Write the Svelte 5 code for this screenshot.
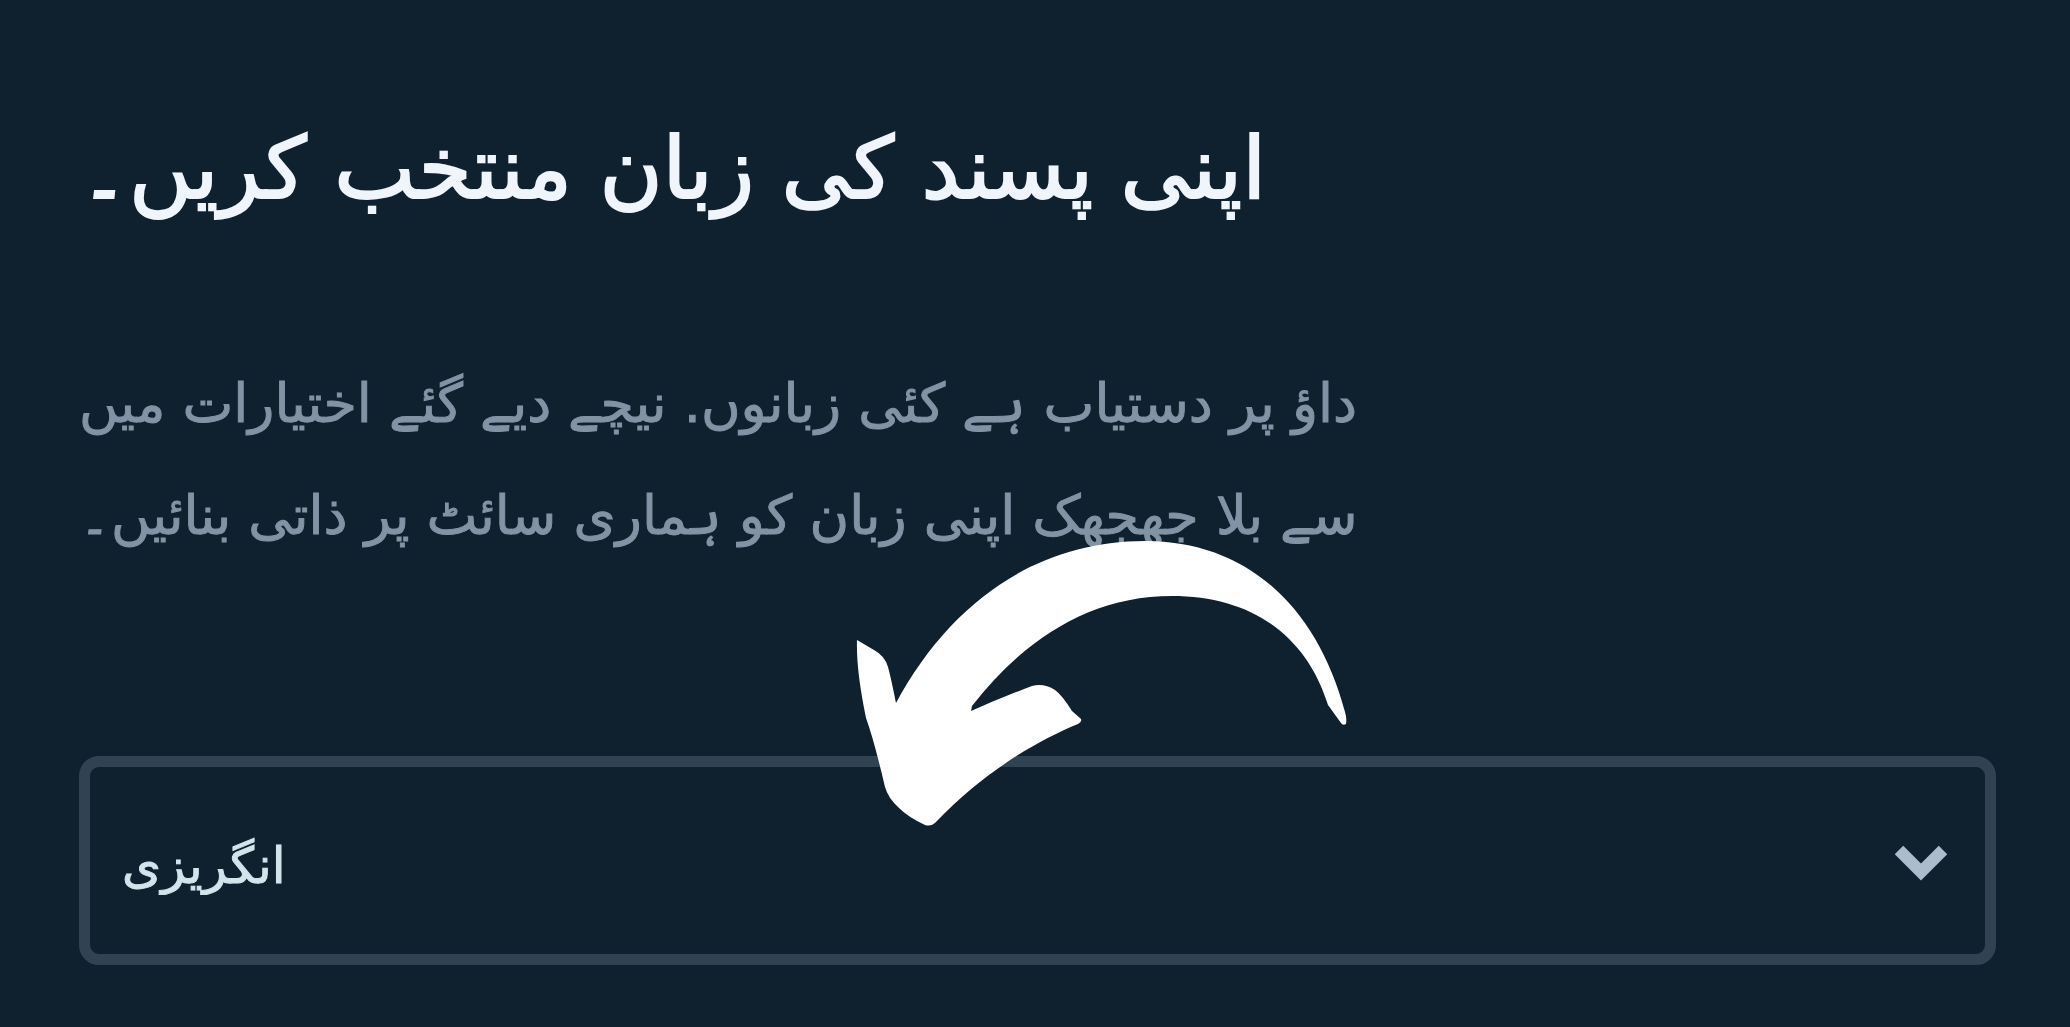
<script lang="ts">
	let language = $state('en');
</script>

<main>
	<h1 dir="rtl">اپنی پسند کی زبان منتخب کریں۔</h1>
	<p>
		<span dir="rtl">داؤ پر دستیاب ہے کئی زبانوں. نیچے دیے گئے اختیارات میں</span>
		<span dir="rtl">سے بلا جھجھک اپنی زبان کو ہماری سائٹ پر ذاتی بنائیں۔</span>
	</p>
	<div class="field">
		<select bind:value={language} aria-label="زبان">
			<option value="en">انگریزی</option>
		</select>
		<svg class="chevron" viewBox="0 0 54 38" aria-hidden="true">
			<path d="M5 6 L27 28 L49 6" />
		</svg>
		<svg class="arrow" viewBox="856 540 492 288" aria-hidden="true">
			<path
				d="M857 640 L874 650 Q885 656 888 667 Q891 678 896 703 C950 603 1036 541 1145 541 C1245 541 1316 604 1345 712 Q1347 718 1346 724 Q1343 726 1341 723 L1328 705 C1306 634 1250 596 1172 596 C1092 596 1026 637 972 706 L971 711 Q1000 698 1032 686 Q1044 683 1055 690 Q1062 695 1072 711 L1081 719 Q1082 722 1078 724 C1034 742 982 774 936 822 Q931 827 925 825 Q908 817 899 808 Q888 798 885 787 Q874 740 866 718 Q856 670 857 640 Z"
			/>
		</svg>
	</div>
</main>

<style>
	:global(body) {
		margin: 0;
		background: #0f212e;
	}

	main {
		padding: 88px 74px 60px 79px;
		font-family: 'DejaVu Sans', sans-serif;
	}

	h1 {
		margin: 0;
		width: fit-content;
		font-size: 86px;
		line-height: 160px;
		font-weight: 400;
		color: #f0f5fc;
		-webkit-text-stroke: 2px #f0f5fc;
	}

	p {
		margin: 100px 0 184px;
		font-size: 54px;
		line-height: 112px;
		color: #8293a5;
		-webkit-text-stroke: 1px #8293a5;
	}

	span {
		display: block;
		width: fit-content;
	}

	.field {
		position: relative;
	}

	select {
		appearance: none;
		display: block;
		box-sizing: border-box;
		width: 100%;
		height: 209px;
		padding: 10px 32px 0;
		border: 11px solid #304352;
		border-radius: 20px;
		background: #0f212e;
		color: #d2e4ec;
		font: 50px 'DejaVu Sans', sans-serif;
		-webkit-text-stroke: 1px #d2e4ec;
	}

	.chevron {
		position: absolute;
		right: 48px;
		top: 88px;
		width: 54px;
		height: 38px;
		fill: none;
		stroke: #abbccd;
		stroke-width: 12px;
	}

	.arrow {
		position: absolute;
		left: 777px;
		bottom: 137px;
		width: 492px;
		fill: #fff;
	}
</style>
